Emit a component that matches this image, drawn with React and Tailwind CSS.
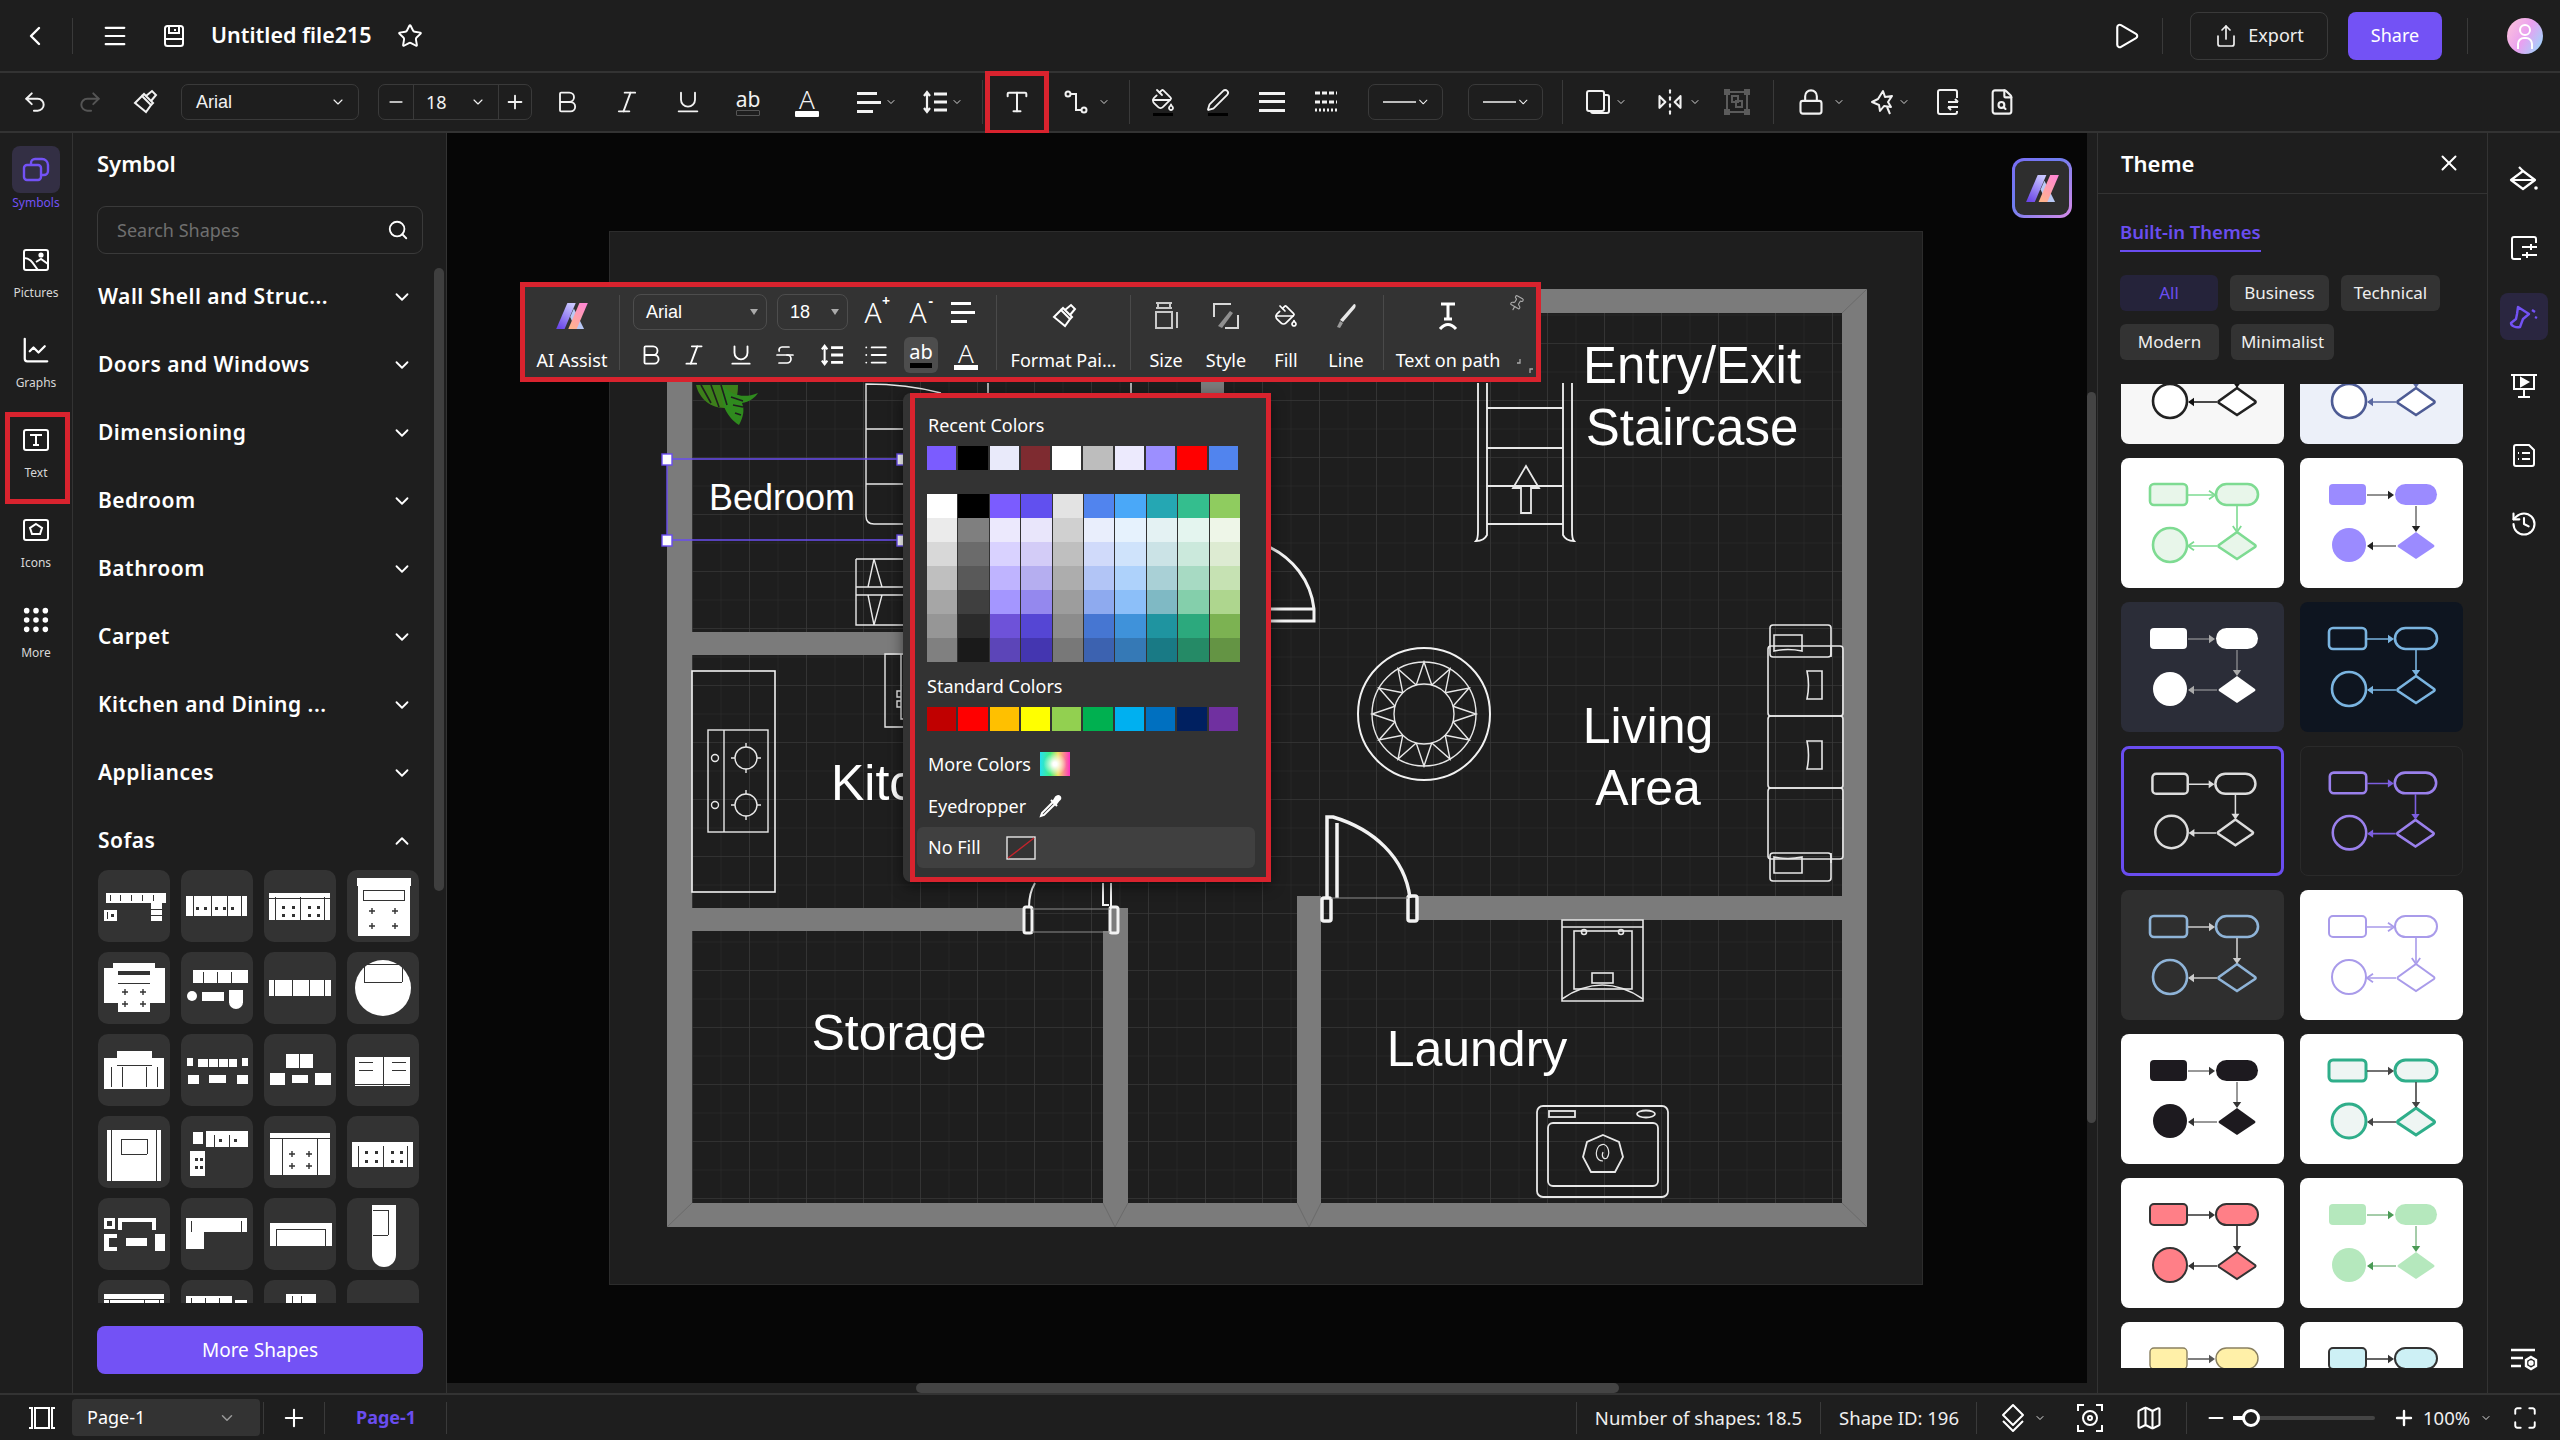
import {
  ChevronLeft, ChevronDown, ChevronUp, Menu, Star, Play, Share, Undo2, Redo2, Bold, Italic, Underline, Type,
  PaintBucket, Pen, Lock, FileSearch, ChartLine, Grip, Search, X, Plus, Minus, History, Map, Maximize,
  Pin, Strikethrough, List, FlipHorizontal2,
} from "lucide-react";

const RED = "border-[#d9232e]";

function Save(p) {
  return (
    <svg width="24" height="24" viewBox="0 0 24 24" fill="none" stroke="currentColor" strokeWidth="2" {...p}>
      <rect x="3" y="2" width="18" height="20" rx="2.5" />
      <path d="M7 2v7h10V2M3 15h18M13 5v2" />
    </svg>
  );
}

function Connector() {
  return (
    <svg width="26" height="26" viewBox="0 0 26 26" fill="none" stroke="currentColor" strokeWidth="2">
      <circle cx="5" cy="5" r="2.5" />
      <circle cx="21" cy="21" r="2.5" />
      <path d="M8 5h5v16h5" />
    </svg>
  );
}

function FormatPaint({ size = 26 }) {
  return (
    <svg width={size} height={size} viewBox="0 0 26 26" fill="none" stroke="currentColor" strokeWidth="2">
      <path d="M3 14l7-7 9 9-5 7z" />
      <path d="M10 7l2-2 9 9-2 2M14 7l6-5 4 4-5 6" />
    </svg>
  );
}

function Bars() {
  return (
    <svg width="26" height="22" viewBox="0 0 26 22" fill="currentColor">
      <rect y="1" width="26" height="3" />
      <rect y="9" width="26" height="3" />
      <rect y="18" width="26" height="3" />
    </svg>
  );
}

function Dashes() {
  return (
    <svg width="24" height="24" viewBox="0 0 24 24" fill="none" stroke="currentColor">
      <path d="M1 3h22M1 12h22" strokeWidth="3" strokeDasharray="5 2" />
      <path d="M1 20h22" strokeWidth="3" strokeDasharray="2 2" />
    </svg>
  );
}

function LineSpacing({ size = 26 }) {
  return (
    <svg width={size} height={size} viewBox="0 0 26 26" fill="none" stroke="currentColor" strokeWidth="2.2">
      <path d="M12 5h13M12 13h13M12 21h13" strokeWidth="3" />
      <path d="M5 3v20M2 7l3-4 3 4M2 19l3 4 3-4" />
    </svg>
  );
}

function AlignLines({ size = 26 }) {
  return (
    <svg width={size} height={size} viewBox="0 0 26 26" fill="currentColor">
      <rect x="2" y="3" width="20" height="3" />
      <rect x="2" y="12" width="24" height="3" />
      <rect x="2" y="21" width="16" height="3" />
    </svg>
  );
}

function Shadow() {
  return (
    <svg width="28" height="28" viewBox="0 0 28 28" fill="none" stroke="currentColor" strokeWidth="2">
      <rect x="3" y="3" width="17" height="20" rx="2" />
      <path d="M20 7h3a2 2 0 0 1 2 2v14a2 2 0 0 1-2 2H9a2 2 0 0 1-2-2" />
    </svg>
  );
}

function GroupIcon() {
  return (
    <svg width="28" height="28" viewBox="0 0 28 28" fill="none" stroke="#5b5b5b" strokeWidth="2">
      <rect x="4" y="4" width="20" height="20" />
      <rect x="9" y="8" width="6" height="6" />
      <rect x="13" y="13" width="6" height="6" />
      <path d="M2 2h4v4H2zM22 2h4v4h-4zM2 22h4v4H2zM22 22h4v4h-4z" fill="#5b5b5b" />
    </svg>
  );
}

function Spark() {
  return (
    <svg width="28" height="28" viewBox="0 0 28 28" fill="none" stroke="currentColor" strokeWidth="2" strokeLinejoin="round">
      <path d="M15 3l2 6 7-1-4 6 3 5-7-1-4 5-1-6-7-3 6-3z" />
      <path d="M19 19l3 7" />
    </svg>
  );
}

function DocSwap() {
  return (
    <svg width="26" height="28" viewBox="0 0 26 28" fill="none" stroke="currentColor" strokeWidth="2">
      <path d="M22 10V4a2 2 0 0 0-2-2H5a2 2 0 0 0-2 2v20a2 2 0 0 0 2 2h15a2 2 0 0 0 2-2v-1" />
      <path d="M13 14h10M20 11l3 3M23 19H13M16 22l-3-3" />
    </svg>
  );
}

function Layers() {
  return (
    <svg width="28" height="30" viewBox="0 0 28 30" fill="none" stroke="currentColor" strokeWidth="2" strokeLinejoin="round">
      <path d="M14 2l10 10-10 10L4 12z" />
      <path d="M4 18l10 10 10-10" />
    </svg>
  );
}

function FocusIcon() {
  return (
    <svg width="28" height="30" viewBox="0 0 28 30" fill="none" stroke="currentColor" strokeWidth="2">
      <path d="M2 8V2h6M20 2h6v6M2 22v6h6M20 28h6v-6" />
      <circle cx="14" cy="15" r="7" />
      <circle cx="14" cy="15" r="2" />
    </svg>
  );
}

function FrameIcon() {
  return (
    <svg width="28" height="24" viewBox="0 0 28 24" fill="none" stroke="currentColor" strokeWidth="2">
      <rect x="7" y="2" width="14" height="20" />
      <path d="M1 2h3v20H1M27 2h-3v20h3" />
    </svg>
  );
}

function AiLogo({ id = "a", w = 32, h = 26 }) {
  return (
    <svg width={w} height={h} viewBox="0 0 34 28">
      <defs>
        <linearGradient id={`${id}L`} x1="0.7" y1="0" x2="0.2" y2="1">
          <stop offset="0" stopColor="#c9c6ff" />
          <stop offset="1" stopColor="#6a45e8" />
        </linearGradient>
        <linearGradient id={`${id}P`} x1="0.8" y1="0" x2="0.2" y2="1">
          <stop offset="0" stopColor="#ff86d2" />
          <stop offset="1" stopColor="#ffb48c" />
        </linearGradient>
      </defs>
      <path d="M0 28L12 0H21L9 28z" fill={`url(#${id}L)`} />
      <path d="M19 6L30 28H21L15 15z" fill="#b9c8f5" />
      <path d="M13 28L25 0H34L22 28z" fill={`url(#${id}P)`} />
    </svg>
  );
}

function TextFrame() {
  return (
    <svg width="30" height="30" viewBox="0 0 30 30" fill="none" stroke="currentColor" strokeWidth="2">
      <rect x="3" y="5" width="24" height="20" rx="2" />
      <path d="M9 10h12M15 10v10M12 20h6" />
    </svg>
  );
}

function IconsFrame() {
  return (
    <svg width="30" height="30" viewBox="0 0 30 30" fill="none" stroke="currentColor" strokeWidth="2">
      <rect x="3" y="5" width="24" height="20" rx="2" />
      <path d="M15 9l6 4-2 6h-8l-2-6z" />
    </svg>
  );
}

function PictureFrame() {
  return (
    <svg width="30" height="30" viewBox="0 0 30 30" fill="none" stroke="currentColor" strokeWidth="2">
      <rect x="3" y="5" width="24" height="20" rx="2" />
      <path d="M3 13c8 0 10 8 14 12M15 17l5-3 7 5" />
      <circle cx="20" cy="10" r="1.6" fill="currentColor" />
    </svg>
  );
}

function SymbolsIcon() {
  return (
    <svg width="30" height="30" viewBox="0 0 30 30" fill="none" stroke="#7352f5" strokeWidth="2.4">
      <rect x="3" y="10" width="17" height="15" rx="3" />
      <path d="M10 10V8a4 4 0 0 1 4-4h7a6 6 0 0 1 6 6v6a4 4 0 0 1-4 4h-3" />
    </svg>
  );
}

function SlidersFrame() {
  return (
    <svg width="28" height="28" viewBox="0 0 28 28" fill="none" stroke="currentColor" strokeWidth="2">
      <path d="M26 9V5a2 2 0 0 0-2-2H4a2 2 0 0 0-2 2v18a2 2 0 0 0 2 2h7" />
      <path d="M12 13h15M12 21h15M21 10v6M17 18v6" />
    </svg>
  );
}

function BrushActive() {
  return (
    <svg width="30" height="26" viewBox="0 0 30 26" fill="none" stroke="#7352f5" strokeWidth="2.4" strokeLinejoin="round">
      <path d="M9 3l11 7-6 5-3 8c-4 1-9-1-9-4l5-4 1-5z" />
      <path d="M23 6l3 2M26 13l2 1" />
    </svg>
  );
}

function BucketFlat() {
  return (
    <svg width="30" height="28" viewBox="0 0 30 28" fill="none" stroke="currentColor" strokeWidth="2.2" strokeLinejoin="round">
      <path d="M2 15L14 6l12 9-12 9z" />
      <path d="M2 15h24M10 2l4 4" />
      <circle cx="27" cy="23" r="1.8" fill="currentColor" stroke="none" />
    </svg>
  );
}

function ScreenPlay() {
  return (
    <svg width="28" height="28" viewBox="0 0 28 28" fill="none" stroke="currentColor" strokeWidth="2">
      <path d="M1 3h26M4 3v14h20V3M14 17v8M8 25h12" />
      <path d="M11 6l7 4-7 4z" fill="currentColor" />
    </svg>
  );
}

function DocList() {
  return (
    <svg width="26" height="26" viewBox="0 0 26 26" fill="none" stroke="currentColor" strokeWidth="2">
      <path d="M3 5a2 2 0 0 1 2-2h13l5 5v14a2 2 0 0 1-2 2H5a2 2 0 0 1-2-2z" />
      <path d="M7 11h1M11 11h8M7 17h1M11 17h8" />
    </svg>
  );
}

function ListSettings() {
  return (
    <svg width="28" height="26" viewBox="0 0 28 26" fill="none" stroke="currentColor" strokeWidth="2.4">
      <path d="M1 3h24M1 11h12M1 19h10" />
      <path d="M21 10l5 3v6l-5 3-5-3v-6z" />
      <circle cx="21" cy="16" r="1.5" />
    </svg>
  );
}

function Cell({ className = "", children }) {
  return <div className={`flex items-center justify-center shrink-0 ${className}`}>{children}</div>;
}

function Small({ className = "" }) {
  return (
    <Cell className={`w-[12px] ${className}`}>
      <ChevronDown size={16} strokeWidth={1.7} />
    </Cell>
  );
}

function VLine({ className = "" }) {
  return <div className={`w-px self-center bg-[#3a3a3a] shrink-0 ${className}`} />;
}

function Select({ className = "", line, label }) {
  return (
    <div className={`h-[36px] border border-[#3a3a3a] rounded-[7px] flex items-center justify-between shrink-0 pl-[14px] pr-[12px] text-[18px] ${className}`}>
      {line ? <div className="w-[36px] h-[2px] bg-[#bdbdbd]" /> : <span className="font-['Liberation_Sans',sans-serif]">{label}</span>}
      <ChevronDown size={16} strokeWidth={1.7} />
    </div>
  );
}

function MainToolbar() {
  const ic = { size: 26, strokeWidth: 1.8 };
  return (
    <div className="flex items-center h-[60px] shrink-0 border-b-2 border-[#333] text-[#f2f2f2]">
      <Cell className="w-[36px] ml-[17px]"><Undo2 {...ic} /></Cell>
      <Cell className="w-[36px] ml-[19px] text-[#555]"><Redo2 {...ic} /></Cell>
      <Cell className="w-[36px] ml-[19px]"><FormatPaint /></Cell>
      <Select className="w-[178px] ml-[18px]" label="Arial" />
      <div className="w-[154px] ml-[19px] h-[36px] border border-[#3a3a3a] rounded-[7px] flex items-center shrink-0">
        <Cell className="w-[34px]"><Minus size={20} /></Cell>
        <div className="w-[86px] h-full border-x border-[#3a3a3a] flex items-center justify-between px-[12px] text-[18px]">
          <span>18</span>
          <ChevronDown size={16} strokeWidth={1.7} />
        </div>
        <Cell className="w-[32px]"><Plus size={22} /></Cell>
      </div>
      <Cell className="w-[36px] ml-[17px]"><Bold size={28} strokeWidth={1.6} /></Cell>
      <Cell className="w-[36px] ml-[24px]"><Italic size={28} strokeWidth={1.6} /></Cell>
      <Cell className="w-[36px] ml-[25px]"><Underline size={28} strokeWidth={1.6} /></Cell>
      <Cell className="w-[36px] ml-[24px] flex-col">
        <span className="text-[21px] leading-[20px]">ab</span>
        <div className="w-[24px] h-[6px] mt-[1px] border border-[#555] rounded-[1px]" />
      </Cell>
      <Cell className="w-[36px] ml-[23px] flex-col">
        <span className="text-[26px] leading-[24px] font-light">A</span>
        <div className="w-[24px] h-[6px] bg-white rounded-[1px]" />
      </Cell>
      <Cell className="w-[28px] ml-[29px]"><AlignLines /></Cell>
      <Small className="ml-[3px]" />
      <Cell className="w-[28px] ml-[24px]"><LineSpacing /></Cell>
      <Small className="ml-[2px]" />
      <VLine className="h-[44px] ml-[19px]" />
      <Cell className="w-[64px] ml-[2px] h-full relative">
        <div className={`absolute left-0 right-0 top-[-2px] bottom-[-4px] border-[5px] ${RED}`} />
        <Type size={28} strokeWidth={1.7} />
      </Cell>
      <Cell className="w-[28px] ml-[13px]"><Connector /></Cell>
      <Small className="ml-[8px]" />
      <VLine className="h-[44px] ml-[19px]" />
      <Cell className="w-[36px] ml-[15px] flex-col">
        <PaintBucket size={24} strokeWidth={1.8} />
        <div className="w-[20px] h-[3px] mt-[1px] bg-black" />
      </Cell>
      <Cell className="w-[36px] ml-[19px] flex-col">
        <Pen size={24} strokeWidth={1.8} />
        <div className="w-[20px] h-[3px] mt-[1px] bg-black" />
      </Cell>
      <Cell className="w-[36px] ml-[18px]"><Bars /></Cell>
      <Cell className="w-[36px] ml-[18px]"><Dashes /></Cell>
      <Select className="w-[75px] ml-[24px] pl-[8px] pr-[8px]" line />
      <Select className="w-[75px] ml-[25px] pl-[8px] pr-[8px]" line />
      <VLine className="h-[44px] ml-[19px]" />
      <Cell className="w-[28px] ml-[21px]"><Shadow /></Cell>
      <Small className="ml-[3px]" />
      <Cell className="w-[28px] ml-[29px]"><FlipHorizontal2 size={28} strokeWidth={1.8} /></Cell>
      <Small className="ml-[5px]" />
      <Cell className="w-[28px] ml-[22px]"><GroupIcon /></Cell>
      <VLine className="h-[44px] ml-[22px]" />
      <Cell className="w-[28px] ml-[23px]"><Lock size={28} strokeWidth={1.8} /></Cell>
      <Small className="ml-[8px]" />
      <Cell className="w-[28px] ml-[23px]"><Spark /></Cell>
      <Small className="ml-[2px]" />
      <Cell className="w-[28px] ml-[24px]"><DocSwap /></Cell>
      <Cell className="w-[28px] ml-[26px]"><FileSearch size={28} strokeWidth={1.8} /></Cell>
    </div>
  );
}

function TopBar() {
  return (
    <div className="flex items-center h-[73px] shrink-0 border-b-2 border-[#333] text-white">
      <Cell className="w-[36px] ml-[17px]"><ChevronLeft size={32} strokeWidth={1.8} /></Cell>
      <VLine className="h-[36px] ml-[19px]" />
      <Cell className="w-[36px] ml-[24px]"><Menu size={28} strokeWidth={1.8} /></Cell>
      <Cell className="w-[36px] ml-[23px]"><Save /></Cell>
      <span className="ml-[19px] text-[21.5px] font-semibold whitespace-nowrap">Untitled file215</span>
      <Cell className="w-[36px] ml-[20px]"><Star size={26} strokeWidth={1.8} /></Cell>
      <div className="flex-1" />
      <Cell className="w-[36px]"><Play size={30} strokeWidth={1.7} /></Cell>
      <VLine className="h-[36px] ml-[18px]" />
      <div className="ml-[27px] w-[138px] h-[48px] border border-[#3a3a3a] rounded-[8px] flex items-center justify-center gap-[10px] text-[18px] text-[#eee]">
        <Share size={24} strokeWidth={1.7} />
        <span>Export</span>
      </div>
      <div className="ml-[20px] w-[94px] h-[48px] bg-[#7352f5] rounded-[8px] flex items-center justify-center text-[18px]">Share</div>
      <VLine className="h-[36px] ml-[25px]" />
      <div className="ml-[39px] mr-[17px] w-[36px] h-[36px] rounded-full bg-[linear-gradient(120deg,#ffc6d9,#e9a0f0_50%,#8fe0ff)] flex items-center justify-center">
        <svg width="20" height="26" viewBox="0 0 20 26" fill="none" stroke="#fff" strokeWidth="2">
          <circle cx="10" cy="7" r="5" />
          <path d="M3 26v-5a6 6 0 0 1 6-6h2a6 6 0 0 1 6 6v5" />
        </svg>
      </div>
    </div>
  );
}

const railItems = [
  { label: "Symbols", icon: <SymbolsIcon />, active: true },
  { label: "Pictures", icon: <PictureFrame /> },
  { label: "Graphs", icon: <ChartLine size={30} strokeWidth={1.8} /> },
  { label: "Text", icon: <TextFrame />, boxed: true },
  { label: "Icons", icon: <IconsFrame /> },
  { label: "More", icon: <Grip size={32} strokeWidth={2.2} /> },
];

function LeftRail() {
  return (
    <div className="w-[73px] shrink-0 border-r border-[#333] pt-[13px] flex flex-col items-center">
      {railItems.map((it) => (
        <div key={it.label} className="relative w-full h-[90px] flex flex-col items-center">
          {it.boxed && <div className={`absolute left-[5px] w-[65px] top-[-4px] h-[92px] border-[5px] ${RED}`} />}
          <div className={`w-[48px] h-[47px] flex items-center justify-center rounded-[8px] text-white ${it.active ? "bg-[#332f44]" : ""}`}>
            {it.icon}
          </div>
          <span className={`text-[12px] leading-[16px] mt-[2px] ${it.active ? "text-[#7352f5]" : "text-[#d8d8d8]"}`}>{it.label}</span>
        </div>
      ))}
    </div>
  );
}

const categories = [
  "Wall Shell and Struc...",
  "Doors and Windows",
  "Dimensioning",
  "Bedroom",
  "Bathroom",
  "Carpet",
  "Kitchen and Dining ...",
  "Appliances",
];

// sofa thumbnails: r = white rect, d = dark rect, c = white circle, p = dark plus
const tiles = [
  [["r", 8, 23, 60, 10], ["d", 12, 25, 1, 6], ["d", 22, 25, 1, 6], ["d", 33, 25, 1, 6], ["d", 44, 25, 1, 6], ["d", 55, 25, 1, 6], ["r", 6, 40, 13, 11], ["d", 9, 42, 1, 7], ["d", 13, 44, 3, 3], ["r", 53, 33, 11, 18], ["d", 53, 39, 11, 1], ["d", 53, 45, 11, 1]],
  [["r", 5, 26, 61, 20], ["d", 12, 26, 1, 20], ["d", 30, 26, 1, 20], ["d", 46, 26, 1, 20], ["d", 60, 26, 1, 20], ["d", 15, 37, 3, 3], ["d", 23, 37, 3, 3], ["d", 34, 37, 3, 3], ["d", 42, 37, 3, 3], ["d", 50, 37, 3, 3]],
  [["r", 5, 23, 61, 27], ["d", 11, 27, 1, 23], ["d", 36, 27, 1, 23], ["d", 60, 27, 1, 23], ["d", 5, 28, 61, 1], ["d", 18, 36, 3, 3], ["d", 28, 36, 3, 3], ["d", 18, 44, 3, 3], ["d", 28, 44, 3, 3], ["d", 44, 36, 3, 3], ["d", 53, 36, 3, 3], ["d", 44, 44, 3, 3], ["d", 53, 44, 3, 3]],
  [["r", 10, 8, 54, 8], ["r", 11, 16, 52, 50], ["d", 16, 20, 42, 1], ["d", 16, 30, 42, 1], ["d", 16, 20, 1, 10], ["d", 57, 20, 1, 10], ["p", 25, 41], ["p", 48, 41], ["p", 25, 56], ["p", 48, 56]],
  [["r", 6, 16, 14, 35], ["r", 52, 16, 15, 35], ["r", 15, 11, 42, 8], ["r", 20, 22, 32, 38], ["d", 20, 22, 32, 1], ["d", 20, 31, 32, 1], ["p", 27, 40], ["p", 45, 40], ["p", 27, 52], ["p", 45, 52]],
  [["r", 12, 18, 55, 13], ["d", 22, 20, 1, 11], ["d", 36, 20, 1, 11], ["d", 50, 20, 1, 11], ["c", 11, 44, 5], ["r", 21, 40, 22, 9], ["r", 48, 38, 14, 13], ["c", 55, 50, 7]],
  [["r", 5, 28, 62, 16], ["d", 10, 28, 1, 16], ["d", 28, 28, 1, 16], ["d", 45, 28, 1, 16], ["d", 60, 28, 1, 16]],
  [["c", 36, 36, 28], ["d", 17, 12, 38, 1], ["d", 17, 30, 38, 1], ["d", 17, 12, 1, 18], ["d", 55, 12, 1, 18]],
  [["r", 6, 24, 60, 31], ["r", 19, 17, 35, 14], ["d", 19, 31, 35, 1], ["d", 13, 33, 1, 20], ["d", 24, 33, 1, 20], ["d", 48, 33, 1, 20], ["d", 59, 33, 1, 20]],
  [["r", 6, 24, 6, 8], ["r", 17, 25, 39, 8], ["d", 27, 25, 1, 8], ["d", 37, 25, 1, 8], ["d", 47, 25, 1, 8], ["r", 61, 24, 6, 8], ["r", 7, 41, 11, 9], ["r", 28, 41, 17, 8], ["r", 56, 41, 11, 9]],
  [["r", 22, 20, 27, 14], ["d", 35, 20, 1, 14], ["r", 6, 39, 15, 12], ["r", 28, 41, 16, 8], ["r", 51, 39, 16, 12]],
  [["r", 8, 23, 55, 29], ["d", 36, 23, 1, 29], ["d", 12, 28, 14, 1], ["d", 12, 36, 14, 1], ["d", 45, 28, 14, 1], ["d", 45, 36, 14, 1], ["d", 8, 50, 55, 1]],
  [["r", 9, 14, 54, 51], ["d", 13, 14, 1, 51], ["d", 58, 14, 1, 51], ["d", 23, 23, 26, 1], ["d", 23, 38, 26, 1], ["d", 23, 23, 1, 15], ["d", 49, 23, 1, 15]],
  [["r", 12, 16, 10, 12], ["r", 25, 15, 42, 16], ["d", 33, 19, 1, 12], ["d", 48, 19, 1, 12], ["d", 38, 23, 3, 3], ["d", 53, 23, 3, 3], ["r", 9, 35, 15, 25], ["d", 14, 42, 3, 3], ["d", 19, 42, 3, 3], ["d", 14, 50, 3, 3], ["d", 19, 50, 3, 3]],
  [["r", 6, 17, 60, 42], ["d", 6, 22, 60, 1], ["d", 18, 22, 1, 37], ["d", 53, 22, 1, 37], ["p", 28, 38], ["p", 45, 38], ["p", 28, 50], ["p", 45, 50]],
  [["r", 5, 26, 61, 25], ["d", 11, 30, 1, 21], ["d", 36, 30, 1, 21], ["d", 60, 30, 1, 21], ["d", 18, 35, 3, 3], ["d", 28, 35, 3, 3], ["d", 18, 44, 3, 3], ["d", 28, 44, 3, 3], ["d", 44, 35, 3, 3], ["d", 53, 35, 3, 3], ["d", 44, 44, 3, 3], ["d", 53, 44, 3, 3]],
  [["r", 6, 20, 11, 11], ["d", 9, 23, 5, 5], ["r", 20, 20, 38, 12], ["d", 24, 24, 30, 8], ["r", 6, 36, 13, 17], ["d", 11, 40, 8, 9], ["r", 28, 40, 21, 8], ["r", 57, 36, 10, 17]],
  [["r", 5, 20, 61, 14], ["d", 10, 23, 1, 11], ["d", 60, 23, 1, 11], ["r", 5, 34, 18, 17]],
  [["r", 6, 25, 62, 23], ["d", 12, 31, 50, 1], ["d", 12, 31, 1, 17], ["d", 61, 31, 1, 17]],
  [["r", 25, 7, 24, 50], ["c", 37, 57, 12], ["d", 26, 12, 15, 1], ["d", 41, 12, 1, 25], ["d", 26, 37, 15, 1]],
  [["r", 6, 14, 60, 18], ["d", 6, 19, 60, 1], ["d", 11, 19, 1, 13], ["d", 46, 19, 1, 13], ["d", 61, 19, 1, 13]],
  [["r", 5, 16, 46, 14], ["d", 10, 18, 1, 12], ["d", 24, 18, 1, 12], ["d", 38, 18, 1, 12], ["r", 54, 20, 12, 10]],
  [["r", 22, 14, 30, 14], ["d", 37, 16, 1, 12], ["d", 28, 16, 1, 8], ["r", 5, 28, 12, 6], ["r", 58, 28, 8, 6]],
  [["r", 8, 24, 60, 8], ["d", 36, 24, 1, 8], ["d", 14, 28, 48, 1]],
];

function Tile({ shapes }) {
  return (
    <div className="w-[72px] h-[72px] rounded-[10px] bg-[#333]">
      <svg width="72" height="72" viewBox="0 0 72 72">
        {shapes.map((s, i) => {
          if (s[0] === "c") return <circle key={i} cx={s[1]} cy={s[2]} r={s[3]} fill="#fff" />;
          if (s[0] === "p") return <path key={i} d={`M${s[1] - 3} ${s[2]}h6M${s[1]} ${s[2] - 3}v6`} stroke="#333" strokeWidth="1.4" />;
          return <rect key={i} x={s[1]} y={s[2]} width={s[3]} height={s[4]} fill={s[0] === "r" ? "#fff" : "#333"} />;
        })}
      </svg>
    </div>
  );
}

function SymbolPanel() {
  return (
    <div className="w-[374px] shrink-0 border-r border-[#333] relative flex flex-col pl-[24px] text-white">
      <div className="h-[60px] flex items-center text-[22px] font-semibold">Symbol</div>
      <div className="w-[326px] h-[48px] mt-[13px] border border-[#3a3a3a] rounded-[9px] flex items-center justify-between pl-[19px] pr-[13px]">
        <span className="text-[18px] text-[#6f6f6f]">Search Shapes</span>
        <Search size={22} strokeWidth={2} />
      </div>
      <div className="mt-[9px] w-[326px]">
        {categories.map((c) => (
          <div key={c} className="h-[68px] flex items-center justify-between pl-[1px] pr-[10px]">
            <span className="text-[21px] font-semibold tracking-[0.5px]">{c}</span>
            <ChevronDown size={22} strokeWidth={2} />
          </div>
        ))}
        <div className="h-[68px] flex items-center justify-between pl-[1px] pr-[10px]">
          <span className="text-[21px] font-semibold tracking-[0.5px]">Sofas</span>
          <ChevronUp size={22} strokeWidth={2} />
        </div>
      </div>
      <div className="mt-[-5px] h-[433px] overflow-hidden">
        <div className="grid grid-cols-[repeat(4,72px)] gap-x-[11px] gap-y-[10px] pl-[1px]">
          {tiles.map((t, i) => (
            <Tile key={i} shapes={t} />
          ))}
        </div>
      </div>
      <div className="w-[326px] h-[48px] mt-[23px] rounded-[8px] bg-[#7352f5] flex items-center justify-center text-[19px]">More Shapes</div>
      <div className="absolute left-[361px] top-[135px] w-[10px] h-[623px] rounded-full bg-[#3f3f3f]" />
    </div>
  );
}

const wallFill = "#7b7b7b";

function FloorPlan() {
  const ln = { fill: "none", stroke: "#f2f2f2", strokeWidth: 2 };
  const thin = { fill: "none", stroke: "#e8e8e8", strokeWidth: 1.4 };
  const spikes = [];
  for (let i = 0; i < 12; i++) {
    const a = (i * Math.PI) / 6;
    const b = a + Math.PI / 12;
    const c = a - Math.PI / 12;
    const cx = 1423;
    const cy = 713;
    spikes.push(
      `M${cx + 30 * Math.cos(c)} ${cy + 30 * Math.sin(c)}L${cx + 52 * Math.cos(a)} ${cy + 52 * Math.sin(a)}L${cx + 30 * Math.cos(b)} ${cy + 30 * Math.sin(b)}`
    );
  }
  return (
    <svg className="absolute inset-0" width="1314" height="1054" viewBox="609 231 1314 1054">
      <defs>
        <pattern id="minor" x="691" y="285" width="28.5" height="28.5" patternUnits="userSpaceOnUse">
          <path d="M28.5 0H0V28.5" fill="none" stroke="#2e2e2e" strokeWidth="1" />
        </pattern>
        <pattern id="major" x="691" y="285" width="57" height="57" patternUnits="userSpaceOnUse">
          <path d="M57 0H0V57" fill="none" stroke="#3c3c3c" strokeWidth="1.2" />
        </pattern>
      </defs>
      <rect x="691" y="312" width="1150" height="890" fill="url(#minor)" />
      <rect x="691" y="312" width="1150" height="890" fill="url(#major)" />

      <path fillRule="evenodd" d="M666 288H1866V1226H666ZM691 312V1202H1841V312Z" fill={wallFill} />
      <rect x="691" y="631" width="240" height="23" fill={wallFill} />
      <rect x="1200" y="312" width="23" height="100" fill={wallFill} />
      <rect x="691" y="907" width="332" height="23" fill={wallFill} />
      <rect x="1110" y="907" width="17" height="23" fill={wallFill} />
      <rect x="1102" y="930" width="25" height="272" fill={wallFill} />
      <rect x="1296" y="895" width="24" height="307" fill={wallFill} />
      <rect x="1416" y="895" width="425" height="24" fill={wallFill} />
      <path d="M666 1226l25-24M1866 1226l-25-24M1866 288l-25 24M1102 1202l12 24 13-24M1296 1202l12 24 12-24" stroke="#6a6a6a" fill="none" />

      {/* plant */}
      <g>
        <path d="M695 384c4 16 18 26 36 22 5-8 6-14 6-22z" fill="#3c7f1a" />
        <path d="M722 384c8 10 20 14 35 8-3 5-9 9-16 10 3 7 1 15-3 22-12-8-20-22-16-40z" fill="#2f8a1e" />
        <path d="M700 384l10 18M710 384l8 22M720 384l6 20M730 396l12 4M732 404l10 2M734 412l6 2" stroke="#1e1e1e" strokeWidth="1.6" />
      </g>

      {/* bed */}
      <path {...thin} d="M940 392c-30-8-55-9-75-9V515q0 8 8 8H940M865 428H940M865 483H940M987 382V394M1130 382V394" />
      {/* nightstand */}
      <path {...thin} d="M855 558H930M855 558V624H930M855 586H930M855 594H930M873 558l-6 28M873 558l8 28M867 594l6 30M873 624l8-30" />
      {/* counter item */}
      <path {...thin} d="M910 653H884V726H910M900 653V718H904M896 690h4v6h-4zM896 700h4v6h-4z" />

      {/* stove */}
      <rect x="691" y="670" width="83" height="221" {...ln} strokeWidth="1.6" />
      <rect x="707" y="729" width="60" height="102" {...thin} />
      <path {...thin} d="M723 729V831" />
      {[757, 804].map((y) => (
        <g key={y} {...thin}>
          <circle cx="745" cy={y} r="11" />
          <circle cx="714" cy={y} r="3.5" />
          <path d={`M745 ${y - 15}v4M745 ${y + 11}v4M730 ${y}h4M756 ${y}h4`} />
        </g>
      ))}

      {/* rug */}
      <circle cx="1423" cy="713" r="66" {...ln} />
      <circle cx="1423" cy="713" r="52" {...thin} />
      <circle cx="1423" cy="713" r="30" {...thin} />
      <path {...thin} d={spikes.join("")} />

      {/* stairs */}
      <path {...ln} strokeWidth="1.8" d="M1477 382V530q0 8-2 10 8 0 11-6V382M1562 382V534q3 6 11 6-2-2-2-10V382" />
      <path {...thin} strokeWidth="1.8" d="M1486 407H1562M1486 447H1562M1486 485H1562M1486 523H1562" />
      <path {...thin} strokeWidth="1.8" d="M1525 465l13 22h-8v25h-10v-25h-8z" />

      {/* door by the popup */}
      <path {...ln} strokeWidth="3" d="M1264 544c28 12 46 36 49 64v12H1262M1313 608H1262" />

      {/* sofa */}
      <g {...thin} strokeWidth="1.6">
        <rect x="1769" y="624" width="61" height="32" rx="3" />
        <rect x="1767" y="645" width="75" height="70" rx="3" />
        <rect x="1767" y="715" width="75" height="72" rx="3" />
        <rect x="1767" y="787" width="75" height="71" rx="3" />
        <rect x="1769" y="852" width="61" height="28" rx="3" />
        <path d="M1773 634h28v16q-14-3-28 0zM1773 856q14 3 28 0v16h-28zM1806 670q3 14 0 28h15v-28zM1806 740q3 14 0 28h15v-28zM1830 656v-10M1830 852v10" />
      </g>

      {/* laundry door */}
      <path {...ln} strokeWidth="3.5" d="M1326 897V816h6c40 12 72 40 77 81M1336 897V822" />
      <rect x="1321" y="897" width="9" height="23" rx="2" {...ln} strokeWidth="3.5" />
      <rect x="1407" y="895" width="9" height="25" rx="2" {...ln} strokeWidth="3.5" />
      <path d="M1330 897H1407" stroke="#8c8c8c" />

      {/* storage door */}
      <rect x="1023" y="906" width="8" height="26" rx="2" {...ln} strokeWidth="3" />
      <rect x="1109" y="906" width="8" height="26" rx="2" {...ln} strokeWidth="3" />
      <path fill="none" stroke="#8c8c8c" d="M1031 908H1109M1031 931H1109" />
      <path {...ln} d="M1034 882q-6 10-6 24M1102 882v22h6M1110 882v24" />

      {/* water heater */}
      <g {...thin} strokeWidth="1.6">
        <path d="M1561 919H1642V1000H1561ZM1561 926H1642" />
        <rect x="1573" y="930" width="58" height="58" />
        <rect x="1591" y="972" width="21" height="10" />
        <path d="M1561 998q40-28 81 0" />
        <circle cx="1583" cy="931" r="2.5" />
        <circle cx="1620" cy="931" r="2.5" />
      </g>

      {/* washer */}
      <g {...thin} strokeWidth="1.8">
        <rect x="1536" y="1105" width="131" height="91" rx="6" />
        <rect x="1547" y="1122" width="110" height="63" rx="5" />
        <rect x="1548" y="1110" width="26" height="6" />
        <ellipse cx="1645" cy="1113" rx="9" ry="3.5" />
        <path d="M1602 1134l16 7 4 15-8 15h-24l-8-15 4-15z" />
        <path d="M1602 1160c-8 0-8-10-4-15 8-6 12 6 8 12-3 2-6-1-4-6" strokeWidth="1.2" />
      </g>

      {/* selected text box */}
      <path d="M666 458V539M666 458H905M666 539H905" stroke="#6a4df0" strokeWidth="1.4" fill="none" />
      {[[666, 458], [666, 539], [901, 458], [901, 539]].map(([x, y]) => (
        <rect key={`${x}-${y}`} x={x - 5} y={y - 5} width="10" height="11" fill="#fff" stroke="#6a4df0" strokeWidth="1.4" />
      ))}
    </svg>
  );
}

const planLabels = [
  { t: "Entry/Exit", cls: "left-[932px] top-[103px] w-[300px] text-[51px]" },
  { t: "Staircase", cls: "left-[932px] top-[165px] w-[300px] text-[51px]" },
  { t: "Bedroom", cls: "left-[99px] top-[236px] w-[200px] text-[36px] !justify-start" },
  { t: "Kitchen", cls: "left-[221px] top-[521px] w-[75px] text-[50px] !justify-start overflow-hidden" },
  { t: "Living", cls: "left-[888px] top-[464px] w-[300px] text-[50px]" },
  { t: "Area", cls: "left-[888px] top-[526px] w-[300px] text-[50px]" },
  { t: "Storage", cls: "left-[139px] top-[771px] w-[300px] text-[50px]" },
  { t: "Laundry", cls: "left-[717px] top-[787px] w-[300px] text-[50px]" },
];

function Divider() {
  return <div className="w-px h-[75px] bg-[#4a4a4a] self-center shrink-0" />;
}

function ToolCol({ label, icon, className = "" }) {
  return (
    <div className={`flex flex-col items-center shrink-0 ${className}`}>
      <div className="h-[58px] flex items-center justify-center">{icon}</div>
      <span className="mt-[3px] text-[18px] leading-[24px] whitespace-nowrap">{label}</span>
    </div>
  );
}

function FloatSelect({ label, className = "" }) {
  return (
    <div className={`h-[36px] border border-[#4d4d4d] rounded-[8px] flex items-center justify-between shrink-0 pl-[12px] pr-[8px] ${className}`}>
      <span className="text-[18px] font-['Liberation_Sans',sans-serif]">{label}</span>
      <svg width="8" height="6" viewBox="0 0 8 6"><path d="M0 0h8L4 6z" fill="#aaa" /></svg>
    </div>
  );
}

function FloatingBar() {
  const i = { strokeWidth: 1.7 };
  return (
    <div className={`absolute left-[73px] top-[149px] w-[1021px] h-[100px] bg-[#333] border-[5px] ${RED} flex text-white`}>
      <ToolCol label="AI Assist" icon={<AiLogo id="bar" />} className="w-[94px]" />
      <Divider />
      <div className="w-[376px] shrink-0 flex flex-col pt-[7px]">
        <div className="flex items-center h-[36px]">
          <FloatSelect label="Arial" className="w-[134px] ml-[13px]" />
          <FloatSelect label="18" className="w-[71px] ml-[10px]" />
          <Cell className="w-[30px] ml-[10px] text-[28px] leading-none font-light relative">
            A<span className="absolute top-[-4px] right-[-2px] text-[14px] font-bold">+</span>
          </Cell>
          <Cell className="w-[30px] ml-[15px] text-[28px] leading-none font-light relative">
            A<span className="absolute top-[-4px] right-[0px] text-[14px] font-bold">-</span>
          </Cell>
          <Cell className="w-[30px] ml-[14px]"><AlignLines /></Cell>
        </div>
        <div className="flex items-center h-[36px] mt-[7px]">
          <Cell className="w-[30px] ml-[16px]"><Bold size={26} {...i} /></Cell>
          <Cell className="w-[30px] ml-[13px]"><Italic size={26} {...i} /></Cell>
          <Cell className="w-[30px] ml-[17px]"><Underline size={26} {...i} /></Cell>
          <Cell className="w-[30px] ml-[14px]"><Strikethrough size={24} {...i} /></Cell>
          <Cell className="w-[30px] ml-[17px]"><LineSpacing size={24} /></Cell>
          <Cell className="w-[30px] ml-[14px]"><List size={26} {...i} /></Cell>
          <Cell className="w-[34px] h-[36px] ml-[13px] rounded-[6px] bg-[#4d4d4d] flex-col">
            <span className="text-[20px] leading-[20px]">ab</span>
            <div className="w-[22px] h-[5px] mt-[1px] bg-black" />
          </Cell>
          <Cell className="w-[30px] ml-[13px] flex-col">
            <span className="text-[26px] leading-[24px] font-light">A</span>
            <div className="w-[24px] h-[5px] bg-white" />
          </Cell>
        </div>
      </div>
      <Divider />
      <ToolCol label="Format Pai..." icon={<FormatPaint />} className="w-[133px]" />
      <Divider />
      <div className="flex w-[252px] pl-[5px] shrink-0">
        <ToolCol className="w-[60px]" label="Size" icon={
          <svg width="26" height="30" viewBox="0 0 26 30" fill="none" stroke="#c9c9c9" strokeWidth="2"><path d="M3 2h16M3 7h16M5 2v5M17 2v5" /><rect x="3" y="11" width="16" height="16" /><path d="M24 11v16" /></svg>
        } />
        <ToolCol className="w-[60px]" label="Style" icon={
          <svg width="30" height="30" viewBox="0 0 30 30" fill="none" stroke="#d8d8d8" strokeWidth="2"><path d="M3 16V3h17M27 14v13H14" /><path d="M7 25l12-15 3 2-11 15z" fill="#8f8f8f" stroke="none" /></svg>
        } />
        <ToolCol className="w-[60px]" label="Fill" icon={<PaintBucket size={24} {...i} />} />
        <ToolCol className="w-[60px]" label="Line" icon={
          <svg width="24" height="28" viewBox="0 0 24 28"><path d="M20 2c2 0 2 2 1 4L9 20l-3-2z" fill="#e8e8e8" /><path d="M6 19l3 2-3 5-3-1z" fill="#9a9a9a" /></svg>
        } />
      </div>
      <Divider />
      <ToolCol label="Text on path" className="w-[128px]" icon={
        <svg width="24" height="34" viewBox="0 0 24 34" fill="none" stroke="#fff" strokeWidth="3"><path d="M5 5h14M12 5v15M8 20h8" /><path d="M4 30q8-9 16 0" /></svg>
      } />
      <Pin size={17} strokeWidth={1.6} className="absolute right-[11px] top-[8px] text-[#aaa] rotate-[30deg]" />
      <svg className="absolute right-[2px] bottom-[3px]" width="18" height="18" viewBox="0 0 18 18" fill="none" stroke="#aaa" strokeWidth="1.3">
        <path d="M1 7h3V3M14 17v-4h3" />
      </svg>
    </div>
  );
}

const recent = ["#7b5cff", "#000000", "#e9eafa", "#7e2b30", "#ffffff", "#bdbdbd", "#eceafd", "#9c8fff", "#ff0000", "#5184ee"];
const standard = ["#c00000", "#ff0000", "#ffc000", "#ffff00", "#92d050", "#00b050", "#00b0f0", "#0070c0", "#002060", "#7030a0"];
const palette = [
  ["#ffffff", "#ebebeb", "#d8d8d8", "#bfbfbf", "#a6a6a6", "#969696", "#808080"],
  ["#000000", "#7f7f7f", "#6b6b6b", "#595959", "#3f3f3f", "#2b2b2b", "#1a1a1a"],
  ["#7b5cff", "#ece9fd", "#d9d2ff", "#bfb4ff", "#a496ff", "#6e52d9", "#5c45b8"],
  ["#6150ef", "#e9e6fb", "#d3ccf7", "#b5aef0", "#9488ee", "#5546d4", "#4436b0"],
  ["#e3e3e3", "#d0d0d0", "#bfbfbf", "#adadad", "#9d9d9d", "#8c8c8c", "#787878"],
  ["#5184ee", "#e9eefc", "#d0dafa", "#b2c5f6", "#8eaaef", "#4676d2", "#3c62b0"],
  ["#4aa8f8", "#e6f2fd", "#cfe3fb", "#aed2fb", "#8cbff9", "#3f92da", "#3579b6"],
  ["#25a7b3", "#e4f2f3", "#cbe3e6", "#a9d0d6", "#7fb9c4", "#1f94a0", "#197a85"],
  ["#34be8e", "#e4f5ef", "#cbe9dc", "#a7dac3", "#84cfab", "#2ca97d", "#258a66"],
  ["#8fcc5f", "#eef6e8", "#ddebd2", "#c6e2b3", "#aed68e", "#7cb252", "#649444"],
];

function Swatches({ colors }) {
  return (
    <div className="grid grid-cols-10 gap-x-[2px] w-[311px] mt-[9px] ml-[24px]">
      {colors.map((c, i) => (
        <div key={i} className="h-[24px]" style={{ background: c }} />
      ))}
    </div>
  );
}

function ColorPopup() {
  return (
    <div className="absolute left-[456px] top-[260px] w-[368px] h-[489px] bg-[#333] rounded-[8px] pt-[20px] text-white text-[18px] shadow-[0_4px_14px_rgba(0,0,0,0.5)]">
      <div className={`absolute left-[7px] right-0 top-0 bottom-0 border-[5px] ${RED}`} />
      <div className="ml-[25px] leading-[24px]">Recent Colors</div>
      <Swatches colors={recent} />
      <div className="grid grid-cols-10 gap-x-[1px] w-[313px] mt-[24px] ml-[24px]">
        {palette.map((col, i) => (
          <div key={i}>
            {col.map((c, j) => (
              <div key={j} className="h-[24px]" style={{ background: c }} />
            ))}
          </div>
        ))}
      </div>
      <div className="ml-[24px] mt-[12px] leading-[24px]">Standard Colors</div>
      <Swatches colors={standard} />
      <div className="ml-[25px] mt-[21px] h-[24px] flex items-center gap-[9px]">
        More Colors
        <div className="w-[30px] h-[24px] bg-[radial-gradient(circle_at_50%_50%,#fff_10%,transparent_60%),linear-gradient(90deg,#25e0f0,#44f080_35%,#f0e060_60%,#ff30c0)]" />
      </div>
      <div className="ml-[25px] mt-[18px] h-[24px] flex items-center gap-[12px]">
        Eyedropper
        <svg width="24" height="24" viewBox="0 0 24 24" fill="none" stroke="#fff" strokeWidth="2">
          <path d="M15 8l-11 11-1 3 3-1 11-11" />
          <path d="M13 6l6 6M15 8l3-5q3-2 4 0 1 2-1 3l-3 4" fill="#fff" />
        </svg>
      </div>
      <div className="ml-[14px] mt-[9px] w-[338px] h-[41px] bg-[#404040] rounded-[6px] flex items-center pl-[11px]">
        No Fill
        <svg className="ml-[25px]" width="30" height="24" viewBox="0 0 30 24" fill="none">
          <rect x="1" y="1" width="28" height="22" fill="#333" stroke="#e6e6e6" strokeWidth="1.4" />
          <path d="M2 22L28 2" stroke="#c4242c" strokeWidth="1.4" />
        </svg>
      </div>
    </div>
  );
}

function Canvas() {
  return (
    <div className="w-[1640px] shrink-0 flex flex-col relative">
      <div className="h-[1250px] bg-[#060606] relative overflow-hidden">
        <div className="absolute left-[162px] top-[98px] w-[1314px] h-[1054px] bg-[#1e1e1e] border border-[#2c2c2c] font-['Liberation_Sans',sans-serif] text-white">
          <FloorPlan />
          {planLabels.map((l) => (
            <div key={l.t} className={`absolute h-[60px] flex items-center justify-center leading-none whitespace-nowrap ${l.cls}`}>{l.t}</div>
          ))}
        </div>
        <div className="absolute left-[1565px] top-[25px] w-[60px] h-[60px] rounded-[12px] p-[3px] bg-[linear-gradient(135deg,#7a6cf5,#6f7df0_40%,#d98be8)]">
          <div className="w-full h-full rounded-[9px] bg-[#2e2e2e] flex items-center justify-center">
            <AiLogo id="fab" w={33} h={27} />
          </div>
        </div>
        <FloatingBar />
        <ColorPopup />
      </div>
      <div className="h-[10px] relative">
        <div className="absolute left-[469px] w-[703px] h-full rounded-full bg-[#444]" />
      </div>
    </div>
  );
}

function Flow({ bg, stroke, fill, arrow, sw = 2.6, open, border }) {
  const head = (x, y, dir) => {
    const s = 6;
    const pts = {
      r: `M${x - s} ${y - s * 0.7}L${x} ${y}L${x - s} ${y + s * 0.7}`,
      d: `M${x - s * 0.7} ${y - s}L${x} ${y}L${x + s * 0.7} ${y - s}`,
      l: `M${x + s} ${y - s * 0.7}L${x} ${y}L${x + s} ${y + s * 0.7}`,
    }[dir];
    return open ? <path d={pts} fill="none" stroke={arrow} strokeWidth={Math.min(sw, 1.8)} /> : <path d={`${pts}Z`} fill={arrow} />;
  };
  const shape = { fill, stroke: stroke || "none", strokeWidth: sw };
  return (
    <div className={`w-[163px] h-[130px] rounded-[8px] shrink-0 box-border ${border || ""}`} style={{ background: bg }}>
      <svg width="100%" height="100%" viewBox="0 0 163 130" className="block">
        <rect x="29" y="26" width="37" height="21" rx="4" {...shape} />
        <rect x="95" y="26" width="42" height="21" rx="10.5" {...shape} />
        <circle cx="49" cy="87" r="17" {...shape} />
        <path d="M116 74l18 13q1 1 0 2l-18 12-18-12q-1-1 0-2z" {...shape} />
        <g stroke={arrow} strokeWidth={Math.min(sw, 1.6)} fill="none">
          <path d="M67 37H92M116 48V72M96 88H68" />
        </g>
        {head(94, 37, "r")}
        {head(116, 74, "d")}
        {head(67, 88, "l")}
      </svg>
    </div>
  );
}

const themes = [
  { bg: "#f7f7f7", stroke: "#222", fill: "#fff", arrow: "#111" },
  { bg: "#ecf0f9", stroke: "#4d5b94", fill: "#fff", arrow: "#5a68a0" },
  { bg: "#fff", stroke: "#7edb92", fill: "#e8f6ea", arrow: "#7edb92", open: true },
  { bg: "#fff", fill: "#9b8bff", arrow: "#222", sw: 1 },
  { bg: "#2b2d38", fill: "#fff", arrow: "#aaa", sw: 1 },
  { bg: "#0e1520", stroke: "#7ab4e0", fill: "none", arrow: "#7ab4e0" },
  { bg: "#1e1e1e", stroke: "#ddd", fill: "none", arrow: "#ddd", border: "border-[3px] border-[#6a4df0]" },
  { bg: "#1e1e1e", stroke: "#9a80ec", fill: "none", arrow: "#7c5ee0", border: "border border-[#2a2a2a]" },
  { bg: "#2f2f2f", stroke: "#8fb4d8", fill: "none", arrow: "#ccc" },
  { bg: "#fff", stroke: "#a99bea", fill: "#fff", arrow: "#a99bea", open: true, sw: 2 },
  { bg: "#fff", fill: "#1d1a1f", arrow: "#333", sw: 1 },
  { bg: "#fff", stroke: "#2fae8a", fill: "#eef5f3", arrow: "#444", sw: 3 },
  { bg: "#fff", stroke: "#333", fill: "#ff7f87", arrow: "#333", sw: 2 },
  { bg: "#fff", fill: "#b5e8bd", arrow: "#4a9a55", sw: 1 },
  { bg: "#fff", stroke: "#8a8060", fill: "#fff0a8", arrow: "#555", sw: 1.4 },
  { bg: "#fff", stroke: "#333", fill: "#cdf0f5", arrow: "#333", sw: 2 },
];

function Chip({ children, active, className = "" }) {
  return (
    <div className={`h-[36px] rounded-[6px] flex items-center justify-center text-[17px] ${active ? "bg-[#25233a] text-[#6a4df0]" : "bg-[#333] text-[#eee]"} ${className}`}>
      {children}
    </div>
  );
}

function ThemePanel() {
  return (
    <div className="w-[391px] shrink-0 border-x border-[#333] flex flex-col text-white">
      <div className="h-[61px] shrink-0 border-b border-[#333] flex items-center justify-between pl-[23px] pr-[25px]">
        <span className="text-[22px] font-semibold">Theme</span>
        <X size={26} strokeWidth={1.8} />
      </div>
      <div className="ml-[22px] mt-[25px] w-[141px] pb-[6px] border-b-2 border-[#6a4df0] text-[18.5px] font-semibold text-[#6a4df0] leading-[25px] whitespace-nowrap">Built-in Themes</div>
      <div className="ml-[22px] mt-[23px] flex gap-[12px]">
        <Chip active className="w-[98px]">All</Chip>
        <Chip className="w-[99px]">Business</Chip>
        <Chip className="w-[99px]">Technical</Chip>
      </div>
      <div className="ml-[22px] mt-[13px] flex gap-[12px]">
        <Chip className="w-[99px]">Modern</Chip>
        <Chip className="w-[103px]">Minimalist</Chip>
      </div>
      <div className="mt-[24px] h-[984px] overflow-hidden">
        <div className="grid grid-cols-[repeat(2,163px)] gap-x-[16px] gap-y-[14px] pl-[23px] mt-[-70px]">
          {themes.map((t, i) => (
            <Flow key={i} {...t} />
          ))}
        </div>
      </div>
    </div>
  );
}

function RightRail() {
  const items = [
    <BucketFlat />,
    <SlidersFrame />,
    <BrushActive />,
    <ScreenPlay />,
    <DocList />,
    <History size={28} strokeWidth={1.8} />,
  ];
  return (
    <div className="flex-1 flex flex-col items-center pt-[22px] text-white">
      {items.map((ic, i) => (
        <div key={i} className={`w-[48px] h-[47px] mb-[22px] rounded-[8px] flex items-center justify-center ${i === 2 ? "bg-[#2a2640]" : ""}`}>
          {ic}
        </div>
      ))}
      <div className="flex-1" />
      <div className="h-[26px] mb-[20px]"><ListSettings /></div>
    </div>
  );
}

function BottomBar() {
  return (
    <div className="h-[47px] shrink-0 border-t-2 border-[#333] flex items-center text-white">
      <Cell className="w-[28px] ml-[28px]"><FrameIcon /></Cell>
      <div className="w-[188px] h-[37px] ml-[16px] bg-[#333] rounded-[4px] flex items-center justify-between pl-[15px] pr-[24px] text-[18px]">
        Page-1
        <ChevronDown size={18} className="text-[#9a9a9a]" />
      </div>
      <VLine className="h-[32px] ml-[3px]" />
      <Cell className="w-[30px] ml-[15px]"><Plus size={28} strokeWidth={1.8} /></Cell>
      <VLine className="h-[32px] ml-[15px]" />
      <span className="ml-[31px] text-[18px] font-bold text-[#6a4df0] w-[60px] whitespace-nowrap">Page-1</span>
      <VLine className="h-[32px] ml-[30px]" />
      <div className="flex-1" />
      <VLine className="h-[32px]" />
      <span className="ml-[18px] text-[18.5px] text-[#eee] whitespace-nowrap">Number of shapes: 18.5</span>
      <VLine className="h-[32px] ml-[18px]" />
      <span className="ml-[18px] text-[18.5px] text-[#eee] whitespace-nowrap">Shape ID: 196</span>
      <VLine className="h-[32px] ml-[17px]" />
      <Cell className="w-[28px] ml-[22px]"><Layers /></Cell>
      <Small className="ml-[7px]" />
      <Cell className="w-[28px] ml-[30px]"><FocusIcon /></Cell>
      <Cell className="w-[28px] ml-[31px]"><Map size={28} strokeWidth={1.8} /></Cell>
      <VLine className="h-[32px] ml-[23px]" />
      <Cell className="w-[22px] ml-[18px]"><Minus size={22} strokeWidth={2.4} /></Cell>
      <div className="ml-[14px] w-[134px] h-[4px] rounded-full bg-[#444] relative">
        <div className="absolute left-[-8px] w-[20px] h-[4px] bg-white" />
        <div className="absolute left-[1px] top-[-7px] w-[18px] h-[18px] rounded-full bg-[#1e1e1e] border-[3px] border-white" />
      </div>
      <Cell className="w-[24px] ml-[17px]"><Plus size={24} strokeWidth={2.4} /></Cell>
      <span className="ml-[7px] text-[18.5px] text-[#eee] w-[50px] whitespace-nowrap">100%</span>
      <Small className="ml-[7px]" />
      <Cell className="w-[26px] ml-[20px] mr-[22px]"><Maximize size={26} strokeWidth={1.8} /></Cell>
    </div>
  );
}

export default function App() {
  return (
    <div className="w-[2560px] h-[1440px] overflow-hidden bg-[#1e1e1e] flex flex-col font-['Noto_Sans',sans-serif]">
      <TopBar />
      <MainToolbar />
      <div className="flex h-[1260px] shrink-0">
        <LeftRail />
        <SymbolPanel />
        <Canvas />
        <div className="w-[10px] shrink-0 relative">
          <div className="absolute top-[259px] w-[9px] h-[731px] rounded-full bg-[#444]" />
        </div>
        <ThemePanel />
        <RightRail />
      </div>
      <BottomBar />
    </div>
  );
}
